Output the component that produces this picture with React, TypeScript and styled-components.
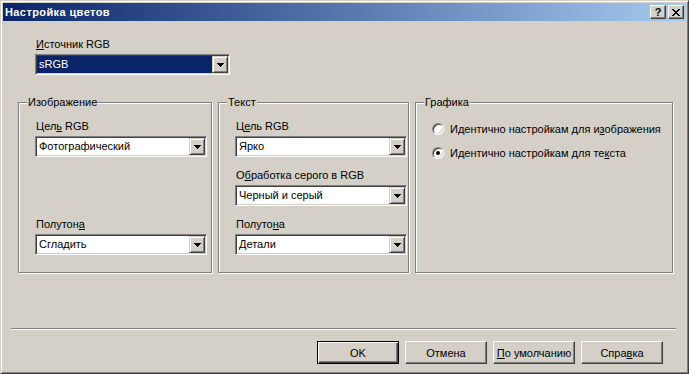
import styled, { createGlobalStyle } from 'styled-components';

const GlobalStyle = createGlobalStyle`
  html, body {
    margin: 0;
    padding: 0;
    background: #d4d0c8;
  }
  body {
    font-family: 'Liberation Sans', Arial, sans-serif;
    font-size: 11px;
    color: #000;
  }
  u {
    text-decoration: underline;
    text-underline-offset: 1px;
  }
`;

const Arrow = () => (
  <svg width="7" height="4" viewBox="0 0 7 4">
    <path d="M0 0h7L3.5 4z" fill="#000" shapeRendering="crispEdges" />
  </svg>
);

const CloseGlyph = () => (
  <svg width="8" height="7" viewBox="0 0 8 7" shapeRendering="crispEdges">
    <path d="M0 0h2v1H0zM6 0h2v1H6zM1 1h2v1H1zM5 1h2v1H5zM2 2h4v1H2zM3 3h2v1H3zM2 4h4v1H2zM1 5h2v1H1zM5 5h2v1H5zM0 6h2v1H0zM6 6h2v1H6z" fill="#000" />
  </svg>
);

type ComboProps = { value: string; width: number; selected?: boolean };

const Combo = ({ value, width, selected }: ComboProps) => (
  <ComboBox $width={width}>
    <ComboValue $selected={selected}>{value}</ComboValue>
    <DropButton>
      <Arrow />
    </DropButton>
  </ComboBox>
);

const App = () => {
  return (
    <>
      <GlobalStyle />
      <Window>
        <TitleBar>
          <Title>Настройка цветов</Title>
          <CaptionButtons>
            <CaptionButton>?</CaptionButton>
            <CaptionButton>
              <CloseGlyph />
            </CaptionButton>
          </CaptionButtons>
        </TitleBar>

        <Body>
          <Source>
            <Label>
              <u>И</u>сточник RGB
            </Label>
            <Combo value="sRGB" width={195} selected />
          </Source>

          <Groups>
            <Group>
              <Legend>Изображение</Legend>
              <FieldStack>
                <Field $row={1}>
                  <Label>
                    Цел<u>ь</u> RGB
                  </Label>
                  <Combo value="Фотографический" width={172} />
                </Field>
                <Field $row={3}>
                  <Label>
                    Полутон<u>а</u>
                  </Label>
                  <Combo value="Сгладить" width={172} />
                </Field>
              </FieldStack>
            </Group>

            <Group>
              <Legend>Текст</Legend>
              <FieldStack>
                <Field $row={1}>
                  <Label>
                    Ц<u>е</u>ль RGB
                  </Label>
                  <Combo value="Ярко" width={172} />
                </Field>
                <Field $row={2}>
                  <Label>
                    О<u>б</u>работка серого в RGB
                  </Label>
                  <Combo value="Черный и серый" width={172} />
                </Field>
                <Field $row={3}>
                  <Label>
                    Полуто<u>н</u>а
                  </Label>
                  <Combo value="Детали" width={172} />
                </Field>
              </FieldStack>
            </Group>

            <Group>
              <Legend>Графика</Legend>
              <RadioList>
                <RadioRow>
                  <Radio />
                  <span>
                    Идентично настройкам для и<u>з</u>ображения
                  </span>
                </RadioRow>
                <RadioRow>
                  <Radio $checked />
                  <span>
                    Идентично настройкам для те<u>к</u>ста
                  </span>
                </RadioRow>
              </RadioList>
            </Group>
          </Groups>

          <Footer>
            <Separator />
            <ButtonRow>
              <Button $default>OK</Button>
              <Button>Отмена</Button>
              <Button>
                <u>П</u>о умолчанию
              </Button>
              <Button>
                Спра<u>в</u>ка
              </Button>
            </ButtonRow>
          </Footer>
        </Body>
      </Window>
    </>
  );
};

export default App;

const Window = styled.div`
  box-sizing: border-box;
  width: 689px;
  height: 374px;
  display: flex;
  flex-direction: column;
  background: #d4d0c8;
  border: 1px solid;
  border-color: #d4d0c8 #404040 #404040 #d4d0c8;
  box-shadow: inset 1px 1px 0 #fff, inset -1px -1px 0 #808080;
  padding: 2px;
`;

const TitleBar = styled.div`
  height: 18px;
  flex-shrink: 0;
  display: flex;
  align-items: center;
  justify-content: space-between;
  padding: 0 2px;
  background: linear-gradient(to right, #0a246a, #a6caf0);
`;

const Title = styled.div`
  color: #fff;
  font-weight: 700;
  font-size: 11px;
  letter-spacing: 0.4px;
  line-height: 13px;
`;

const CaptionButtons = styled.div`
  display: flex;
  gap: 2px;
`;

const CaptionButton = styled.div`
  box-sizing: border-box;
  width: 16px;
  height: 14px;
  display: flex;
  align-items: center;
  justify-content: center;
  background: #d4d0c8;
  border: 1px solid;
  border-color: #fff #404040 #404040 #fff;
  box-shadow: inset -1px -1px 0 #808080;
  font-weight: 700;
  font-size: 11px;
  line-height: 1;
`;

const Body = styled.div`
  flex: 1;
  display: flex;
  flex-direction: column;
`;

const Source = styled.div`
  display: flex;
  flex-direction: column;
  gap: 3px;
  margin: 17px 0 0 32px;
`;

const Label = styled.div`
  line-height: 13px;
  padding-left: 1px;
  white-space: nowrap;
`;

const ComboBox = styled.div<{ $width: number }>`
  box-sizing: border-box;
  width: ${({ $width }) => $width}px;
  height: 21px;
  display: flex;
  background: #fff;
  border: 1px solid;
  border-color: #808080 #fff #fff #808080;
  box-shadow: inset 1px 1px 0 #404040, inset -1px -1px 0 #d4d0c8;
  padding: 1px;
`;

const ComboValue = styled.div<{ $selected?: boolean }>`
  flex: 1;
  display: flex;
  align-items: center;
  padding-left: 2px;
  line-height: 13px;
  white-space: nowrap;
  background: ${({ $selected }) => ($selected ? '#0a246a' : '#fff')};
  color: ${({ $selected }) => ($selected ? '#fff' : '#000')};
`;

const DropButton = styled.div`
  box-sizing: border-box;
  width: 16px;
  height: 17px;
  display: flex;
  align-items: center;
  justify-content: center;
  background: #d4d0c8;
  border: 1px solid;
  border-color: #d4d0c8 #404040 #404040 #d4d0c8;
  box-shadow: inset 1px 1px 0 #fff, inset -1px -1px 0 #808080;
`;

const Groups = styled.div`
  display: grid;
  grid-template-columns: 194px 191px 258px;
  column-gap: 6px;
  margin: 21px 0 0 15px;
`;

const Group = styled.fieldset`
  margin: 0;
  padding: 0;
  min-width: 0;
  border: 1px solid #808080;
  box-shadow: inset 1px 1px 0 #fff, 1px 1px 0 #fff;
`;

const Legend = styled.legend`
  margin-left: 8px;
  padding: 0 1px;
  line-height: 13px;
  background: #d4d0c8;
`;

const FieldStack = styled.div`
  display: grid;
  grid-template-rows: repeat(3, 37px);
  row-gap: 12px;
  padding: 11px 0 17px 16px;
`;

const Field = styled.div<{ $row: number }>`
  grid-row: ${({ $row }) => $row};
  display: flex;
  flex-direction: column;
  gap: 3px;
`;

const RadioList = styled.div`
  display: flex;
  flex-direction: column;
  gap: 6px;
  padding: 11px 0 0 16px;
`;

const RadioRow = styled.div`
  height: 18px;
  display: flex;
  align-items: center;
  gap: 6px;
  white-space: nowrap;
`;

const Radio = styled.span<{ $checked?: boolean }>`
  box-sizing: border-box;
  width: 12px;
  height: 12px;
  flex-shrink: 0;
  display: flex;
  align-items: center;
  justify-content: center;
  border-radius: 50%;
  background: #fff;
  border: 1px solid;
  border-color: #808080 #fff #fff #808080;
  box-shadow: inset 1px 1px 0 #404040, inset -1px -1px 0 #d4d0c8;
  &::after {
    content: '';
    width: 4px;
    height: 4px;
    border-radius: 50%;
    background: ${({ $checked }) => ($checked ? '#000' : 'transparent')};
  }
`;

const Footer = styled.div`
  margin-top: auto;
  display: flex;
  flex-direction: column;
  padding-bottom: 7px;
`;

const Separator = styled.div`
  height: 0;
  margin: 0 10px 0 8px;
  border-top: 1px solid #808080;
  border-bottom: 1px solid #fff;
`;

const ButtonRow = styled.div`
  display: flex;
  justify-content: flex-end;
  gap: 6px;
  padding: 11px 23px 0 0;
`;

const Button = styled.div<{ $default?: boolean }>`
  box-sizing: border-box;
  width: 82px;
  height: 23px;
  display: flex;
  align-items: center;
  justify-content: center;
  background: #d4d0c8;
  border: 1px solid;
  border-color: ${({ $default }) => ($default ? '#000' : '#fff #404040 #404040 #fff')};
  box-shadow: ${({ $default }) =>
    $default
      ? 'inset 1px 1px 0 #fff, inset -1px -1px 0 #404040, inset -2px -2px 0 #808080'
      : 'inset -1px -1px 0 #808080'};
  white-space: nowrap;
`;
